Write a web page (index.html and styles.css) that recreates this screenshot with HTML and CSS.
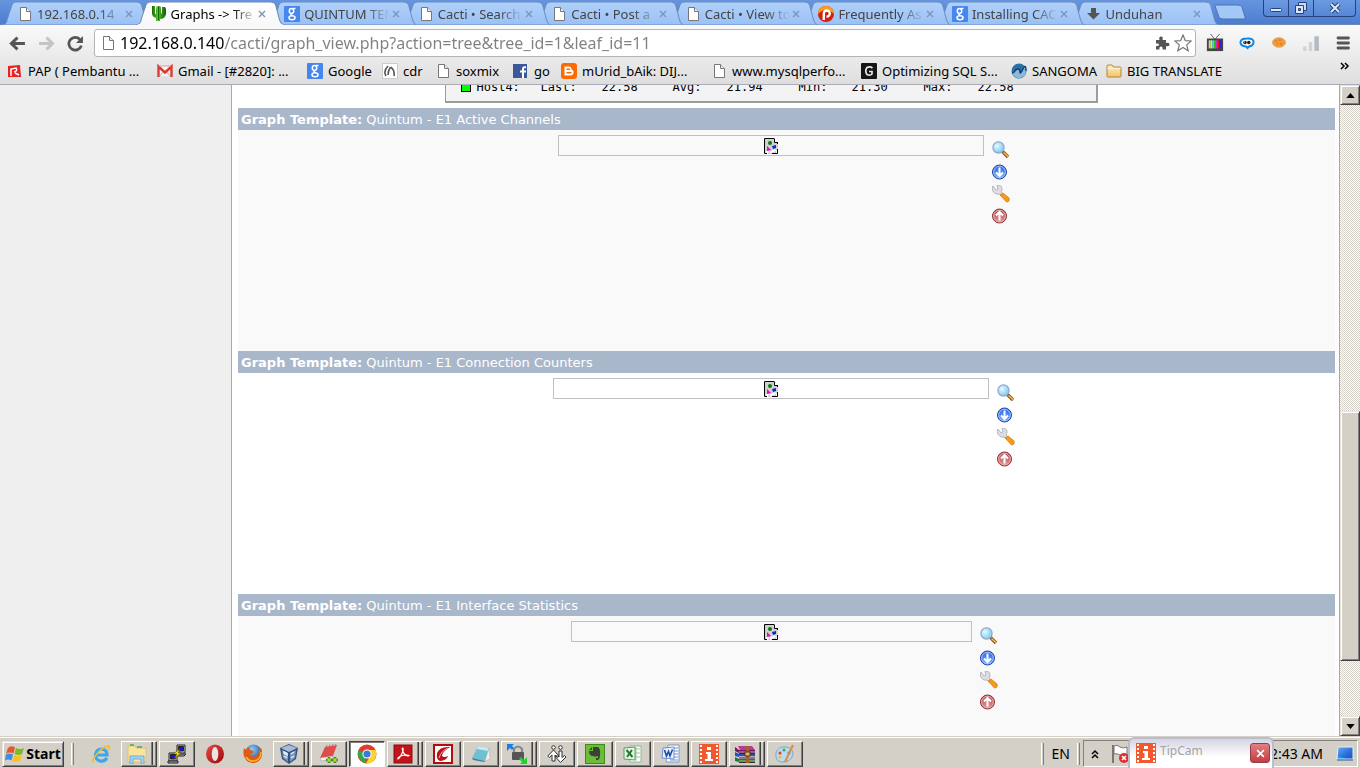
FILE: index.html
```html
<!DOCTYPE html>
<html lang="en">
<head>
<meta charset="utf-8">
<title>Graphs -&gt; Tree Mode</title>
<link rel="stylesheet" href="styles.css">
</head>
<body>
<svg class="defs" aria-hidden="true">
  <defs>
    <linearGradient id="tabFill" x1="0" y1="0" x2="0" y2="1"><stop offset="0" stop-color="#b0d0fa"/><stop offset="1" stop-color="#9ac1f5"/></linearGradient>
    <linearGradient id="activeFill" x1="0" y1="0" x2="0" y2="1"><stop offset="0" stop-color="#fff"/><stop offset="1" stop-color="#f8f8f8"/></linearGradient>
    <linearGradient id="folderFill" x1="0" y1="0" x2="0" y2="1"><stop offset="0" stop-color="#fff0c4"/><stop offset="1" stop-color="#f2c26b"/></linearGradient>
    <linearGradient id="cactusFill" x1="0" y1="0" x2="1" y2="0"><stop offset="0" stop-color="#176a0c"/><stop offset=".4" stop-color="#5cc42c"/><stop offset="1" stop-color="#0e5c08"/></linearGradient>
    <radialGradient id="blueFill" cx=".5" cy=".8" r=".8"><stop offset="0" stop-color="#6fb4ff"/><stop offset="1" stop-color="#2a5fe0"/></radialGradient>
    <radialGradient id="redFill" cx=".5" cy=".8" r=".8"><stop offset="0" stop-color="#e09a9a"/><stop offset="1" stop-color="#b04448"/></radialGradient>
    <radialGradient id="lensFill" cx=".35" cy=".35" r=".7"><stop offset="0" stop-color="#e4fbff"/><stop offset="1" stop-color="#7cc8ec"/></radialGradient>
    <linearGradient id="screenFill" x1="0" y1="0" x2="1" y2="1"><stop offset="0" stop-color="#6aaaf4"/><stop offset=".6" stop-color="#2a6ed8"/><stop offset="1" stop-color="#1850b8"/></linearGradient>
    <radialGradient id="foxBlue" cx=".4" cy=".3" r=".7"><stop offset="0" stop-color="#8fd0f4"/><stop offset="1" stop-color="#1c4c98"/></radialGradient>
    <linearGradient id="operaFill" x1="0" y1="0" x2="1" y2="1"><stop offset="0" stop-color="#ee4848"/><stop offset="1" stop-color="#960808"/></linearGradient>
  </defs>
  <symbol id="tab" viewBox="0 0 147 24" preserveAspectRatio="none"><path d="M0 24C3 23 4 21 4 19L9 4Q10 1 13 1H134Q138 1 139 4L143 19Q144 23 147 24Z" fill="url(#tabFill)" stroke="#6d8cbf"/></symbol>
  <symbol id="tab-active" viewBox="0 0 147 24" preserveAspectRatio="none"><path d="M0 24C3 23 4 21 4 19L9 4Q10 1 13 1H134Q138 1 139 4L143 19Q144 23 147 24Z" fill="url(#activeFill)" stroke="#6d87b4"/><path d="M1 24H146" stroke="#f8f8f8" stroke-width="2"/></symbol>
  <symbol id="page" viewBox="0 0 16 16"><path d="M3.500 1.500H9.500L13.500 5.500V14.500H3.500Z" fill="#fff" stroke="#777"/><path d="M9.500 1.500V5.500H13.500" fill="#eee" stroke="#777"/></symbol>
  <symbol id="cactus" viewBox="0 0 16 16"><path d="M1 0H4V7Q4 8 5 8V3Q5 1 6 0H9Q10 1 10 3V8Q11 8 11 5V1H14Q15 2 15 4V8Q14 13 9 13V15H5V12Q1 11 1 7Z" fill="url(#cactusFill)"/><path d="M7.500 1V14" stroke="#13680c"/></symbol>
  <symbol id="google" viewBox="0 0 16 16"><rect width="16" height="16" rx="1" fill="#4787ed"/><g fill="none" stroke="#fff" stroke-width="1.500"><ellipse cx="7.500" cy="5" rx="2.200" ry="2.400"/><path d="M9 2.600H11.500M7.500 7.500Q6 9 8.500 9.500"/><ellipse cx="8" cy="11.800" rx="3" ry="2"/></g></symbol>
  <symbol id="pp" viewBox="0 0 16 16"><circle cx="8" cy="8" r="8" fill="#d4200c"/><path d="M0 8A8 8 0 0 1 16 8Q12 4 8 4 4 4 0 8Z" fill="#f8a020"/><path d="M5.800 14V7.500A3 3 0 1 1 8.500 10.500" fill="none" stroke="#fff" stroke-width="2.400"/></symbol>
  <symbol id="down" viewBox="0 0 16 16"><path d="M5 2H10V7H14L7.500 13.500 1 7H5Z" fill="#555"/></symbol>
  <symbol id="close" viewBox="0 0 8 8"><path d="M1 1L7 7M7 1L1 7" stroke="currentColor" stroke-width="1.400"/></symbol>
  <symbol id="back" viewBox="0 0 16 16"><path d="M15 8H3M8 2.500L2.200 8 8 13.500" fill="none" stroke="currentColor" stroke-width="2.700"/></symbol>
  <symbol id="reload" viewBox="0 0 16 16"><path d="M12.500 4.500A6 6 0 1 0 13.500 10" fill="none" stroke="#555" stroke-width="2.600"/><path d="M15 1V7.500H8.500Z" fill="#555"/></symbol>
  <symbol id="puzzle" viewBox="0 0 16 16"><path d="M2 5H5.500Q4.500 1.500 7 1.500 9.500 1.500 8.500 5H12V8Q15.500 7 15.500 9.500 15.500 12 12 11V14.500H8.500Q9 11.500 7 11.500 5 11.500 5.500 14.500H2V11Q5 11.500 5 9.500 5 8 2 8.500Z" fill="#555"/></symbol>
  <symbol id="star" viewBox="0 0 18 18"><path d="M9 1L11.300 6.600 17.200 7 12.700 10.900 14.200 16.800 9 13.500 3.800 16.800 5.300 10.900.8 7 6.700 6.600Z" fill="#fff" stroke="#777" stroke-width="1.200"/></symbol>
  <symbol id="tv" viewBox="0 0 18 20"><path d="M4 0L9 6 14 0" fill="none" stroke="#555"/><rect y="5" width="18" height="14" fill="#444"/><path d="M2 7H4V16H2Z" fill="#ccc"/><path d="M4 7H6V16H4Z" fill="#ee3"/><path d="M6 7H8V16H6Z" fill="#3ce0e0"/><path d="M8 7H10V16H8Z" fill="#2c2"/><path d="M10 7H12V16H10Z" fill="#d2d"/><path d="M12 7H14V16H12Z" fill="#e11"/><path d="M14 7H16V16H14Z" fill="#22d"/></symbol>
  <symbol id="chat" viewBox="0 0 18 18"><path d="M9 4.500Q16 4 15.500 8.500 15 12 11 12.500L9.500 14 8 12.500Q2 12 2.500 8 3 4.500 9 4.500Z" fill="#fff" stroke="#1286e6" stroke-width="2"/><circle cx="7" cy="8.500" r="1.800" fill="#222"/><circle cx="10.800" cy="8.500" r="1.800" fill="#222"/><circle cx="6.500" cy="8" r=".6" fill="#fff"/></symbol>
  <symbol id="cookie" viewBox="0 0 18 18"><ellipse cx="9" cy="8.500" rx="6.500" ry="4.800" fill="#ee9a3c" stroke="#e8a860"/><path d="M5 7h2M9 6h2M10 10h2M7 10h1" stroke="#c8701e"/></symbol>
  <symbol id="signal" viewBox="0 0 16 16"><path d="M1 11H4V15H1ZM6 7H9V15H6Z" fill="#cfd3d8"/><path d="M11 2H15V15H11Z" fill="#b4bbc4"/></symbol>
  <symbol id="menu" viewBox="0 0 18 18"><path d="M4 4H14.500M4 9H14.500M4 14H14.500" stroke="#555" stroke-width="2.800" stroke-linecap="round"/></symbol>
  <symbol id="pap" viewBox="0 0 16 16"><path d="M1 3L13 2 14 14H1Z" fill="#e62222"/><path d="M4 13V6L9 5Q11 8 7 9M8 10L12 12" fill="none" stroke="#fff" stroke-width="1.500"/></symbol>
  <symbol id="gmail" viewBox="0 0 16 16"><path d="M0 3H16V13H0Z" fill="#f8f4f4"/><path d="M1.500 14V3.500L8 9.500 14.500 3.500V14" fill="none" stroke="#d93a30" stroke-width="2.400"/><path d="M3 13L6 9M13 13L10 9M2 3H14" stroke="#e09a94"/></symbol>
  <symbol id="cdr" viewBox="0 0 16 16"><rect x=".5" y=".5" width="15" height="15" fill="#fff" stroke="#ccc"/><path d="M6 3Q1 8 4 13M6 12Q6 8 8.500 4M9 4Q13 8 12 13" fill="none" stroke="#555" stroke-width="1.600"/></symbol>
  <symbol id="fb" viewBox="0 0 16 16"><rect x="0" y="1" width="14" height="14" fill="#3b5998"/><path d="M10 15V6Q10 3.800 13 4.200M7 8.500H13" fill="none" stroke="#fff" stroke-width="2"/></symbol>
  <symbol id="blogger" viewBox="0 0 16 16"><rect width="16" height="16" rx="3" fill="#ff6a00"/><path d="M3.500 3.500H8.500Q10.500 4 10.500 6.500 13 7 12.500 10 12 12.500 9.500 12.500H3.500Z" fill="#fff"/><path d="M6 6.300H8.500M6 9.700H10" stroke="#ff6a00" stroke-width="1.400" stroke-linecap="round"/></symbol>
  <symbol id="gbox" viewBox="0 0 16 16"><rect width="16" height="16" rx="1" fill="#151515"/><path d="M11.500 5Q9 3 6 4.500 3.500 8 6 11.500 9 13 11 11V8.500H8" fill="none" stroke="#e8e8e8" stroke-width="1.700"/></symbol>
  <symbol id="sangoma" viewBox="0 0 16 16"><circle cx="8" cy="8" r="7.500" fill="#2c70aa"/><path d="M1 10Q3 10 4 8T7 6 9 9 12 6 15 8Q15 15 8 15 3 15 1 10Z" fill="#8db8d8"/><path d="M1 10Q3 10 4 8T7 6 9 9 12 6 15 8" fill="none" stroke="#123f72" stroke-width="1.400"/></symbol>
  <symbol id="folder" viewBox="0 0 16 16"><path d="M1 13V3Q1 2 2 2H6L7.500 4H14Q15 4 15 5V13Q15 14 14 14H2Q1 14 1 13Z" fill="url(#folderFill)" stroke="#b78336"/><path d="M1.500 5.500H14.500" stroke="#fff3d0"/></symbol>
  <symbol id="broken" viewBox="0 0 14 16"><path d="M1 0H10V4H14V10L12 13V16H4L5 13H2V16H1Z" fill="#d0d0d0"/><path d="M4 .5H.5V15.500H3M4 .5H10.500M10.500 1V4.500H13.500M13.500 4V6M13.500 11V15.500H8" fill="none" stroke="#000"/><path d="M11.500 12L6 14.500" stroke="#fff" stroke-width="2"/><circle cx="6" cy="5" r="2" fill="#087c0c"/><path d="M3 8L7 12 3 13Z" fill="#f000d0"/><path d="M8 8L12 7V10L9 11Z" fill="#1028c8"/></symbol>
  <symbol id="zoom" viewBox="0 0 18 18"><path d="M10.500 10.500L16 16" stroke="#8a5414" stroke-width="3.400"/><path d="M11.500 11.500L16.500 16" stroke="#eebc58" stroke-width="1.600"/><circle cx="6.500" cy="6.500" r="5.600" fill="url(#lensFill)" stroke="#8ca8d4" stroke-width="1.200"/></symbol>
  <symbol id="download" viewBox="0 0 18 18"><circle cx="7.500" cy="9" r="7" fill="url(#blueFill)" stroke="#2444a4"/><circle cx="7.500" cy="9" r="5.800" fill="none" stroke="#a6c8ff"/><path d="M7.500 4.500V13M4 9.500L7.500 13 11 9.500" fill="none" stroke="#fff" stroke-width="2"/></symbol>
  <symbol id="wrench" viewBox="0 0 18 18"><path d="M1 1L4 5 6 4 5 0Q10 0 10 4 10 6 9 7L12 10 10 12 7 9Q2 10 0 4Z" fill="#dcdee4" stroke="#a4a8b2" stroke-width=".8"/><path d="M8 10L11 8 17 13Q18 17 14.500 17Z" fill="#f89a18" stroke="#d67c14" stroke-width=".8"/></symbol>
  <symbol id="top" viewBox="0 0 18 18"><circle cx="7.500" cy="9" r="7" fill="url(#redFill)" stroke="#8c3438"/><circle cx="7.500" cy="9" r="5.800" fill="none" stroke="#f0b4b4"/><path d="M7.500 13.500V5M4 8.500L7.500 5 11 8.500" fill="none" stroke="#fff" stroke-width="2"/></symbol>
  <symbol id="windows" viewBox="0 0 20 20"><path d="M3 4Q6 1 10 3.500L8.500 9.500Q5 7.500 1 9.500Z" fill="#e8562a"/><path d="M11 4Q15 6 19 4L17 10Q13 12 9.500 10Z" fill="#7cba2c"/><path d="M1 10.500Q5 8.500 8 10.500L6.500 16.500Q3 14.500 0 16.500Z" fill="#3c8ee4"/><path d="M9 11Q13 13 17 11L15 17Q11 19 7.500 17Z" fill="#f8c41c"/></symbol>
  <symbol id="ie" viewBox="0 0 20 20"><path d="M16 14Q13 18 9 17 4 15.500 4.500 10.500 5.500 5 10.500 5 16 5.500 16 11H6" fill="none" stroke="#3aa8e8" stroke-width="3.200"/><path d="M3 18Q0 18 5 11 11 3 17 2 20 2 17 6" fill="none" stroke="#f0bc30" stroke-width="1.600"/></symbol>
  <symbol id="explorer" viewBox="0 0 20 20"><path d="M1 2H8L9 4H19V18H1Z" fill="#f8e49a" stroke="#d8bc6c" stroke-width=".8"/><path d="M3 1H7M10 3H15" stroke="#46a860" stroke-width="1.400"/><path d="M3 20V12H17V20H14V15H6V20Z" fill="#a4d4f4" stroke="#5a9cc8" stroke-width=".7"/></symbol>
  <symbol id="putty" viewBox="0 0 20 20"><g stroke="#222"><path d="M10 1H18V9H10ZM2 9H10V17H2Z" fill="#ccc"/><path d="M11.500 2.500H16.500V7H11.500ZM3.500 10.500H8.500V15H3.500Z" fill="#1414d8"/><path d="M8 10H19L17 12H9ZM1 17H11V19H1Z" fill="#aaa"/></g><path d="M13 5L6 10H10L7 15 14 9H11Z" fill="#ffe800" stroke="#554800" stroke-width=".6"/></symbol>
  <symbol id="opera" viewBox="0 0 20 20"><ellipse cx="10" cy="10" rx="9" ry="9.500" fill="url(#operaFill)"/><ellipse cx="10" cy="10" rx="3.300" ry="7" fill="#e8e4de"/></symbol>
  <symbol id="firefox" viewBox="0 0 20 20"><circle cx="10.500" cy="9" r="8.500" fill="url(#foxBlue)"/><path d="M1 4L3 6Q4 4 6 3L7 6Q11 6 10 9L7 10Q9 14 13 12 16 11 16 6L18 4Q21 12 16 17 10 21 4 17 -1 12 1 4Z" fill="#e05a14"/><path d="M3 13Q7 19 14 16 18 14 18 8" fill="none" stroke="#f8bc28" stroke-width="1.400"/></symbol>
  <symbol id="vbox" viewBox="0 0 20 20"><path d="M10 0L19 4 17 15 10 20 3 15 1 4Z" fill="#34527e"/><path d="M10 1L18 4 10 8 2 4Z" fill="#a8bcd8"/><path d="M3 6L9 9V18L4 14ZM11 9L17 6 16 14 11 18Z" fill="#7894bc"/><path d="M5 8L8 9.500V11L5 9ZM5 12L8 14M12 10L15 8M12 14L15 12" fill="none" stroke="#e4edf8" stroke-width="1.500"/></symbol>
  <symbol id="redpad" viewBox="0 0 20 20"><path d="M6 3L18 1 14 12 1 14Z" fill="#e04c4c"/><path d="M1 14L14 12 13 15 2 17Z" fill="#f6f0ee" stroke="#999" stroke-width=".5"/><path d="M7 3L8 1M10 2.500L11 .5M13 2L14 0M16 1.500L17 0" stroke="#888"/><path d="M10 13V19M7 16H13M16 13V19M13 16H19" stroke="#35901a" stroke-width="2.600"/><path d="M10 14V18M8 16H12M16 14V18M14 16H18" stroke="#e8e838"/></symbol>
  <symbol id="chrome" viewBox="0 0 20 20"><circle cx="10" cy="10" r="9.500" fill="#e33c2e"/><path d="M10 10L1.500 6Q-1 15 9 19.500Z" fill="#2fa84c"/><path d="M10 6H18.500Q21 12 16 17.500 13 20 9 19.500L13.500 11Z" fill="#fbd42e"/><circle cx="10" cy="10" r="4.600" fill="#fff"/><circle cx="10" cy="10" r="3.600" fill="#3c78d8"/></symbol>
  <symbol id="adobe" viewBox="0 0 20 20"><rect x="1" y="1" width="18" height="18" fill="#c4141a" stroke="#860c10"/><path d="M9.500 4Q8.500 5 11 9.500 14 13 16 11.500 15 10.500 9 11.500 4 13.500 5 15 7 14.500 10 7 10.500 4 9.500 4Z" fill="none" stroke="#fff" stroke-width="1.200"/></symbol>
  <symbol id="redleaf" viewBox="0 0 20 20"><rect x="1" y="1" width="18" height="18" fill="#fff" stroke="#b40c10" stroke-width="2"/><path d="M17 3Q7 2 4 9 3 17 8 17 14 16 15 12 11 14 9 12 9 8 17 3Z" fill="#b81418"/><path d="M6 14Q8 7 15 4" stroke="#e8b0b0" fill="none"/></symbol>
  <symbol id="notepad" viewBox="0 0 20 20"><path d="M7 2L18 4 14 17 1 14Z" fill="#70c0d4"/><path d="M7 2L18 4 17 7 6 5Z" fill="#c6eaf4"/><path d="M18 4L19 15 14 17Z" fill="#f4f2e8" stroke="#aaa" stroke-width=".5"/><path d="M1 14L14 17 13 18 2 16Z" fill="#447e98"/></symbol>
  <symbol id="lock" viewBox="0 0 20 20"><path d="M7 9V5Q11 0 15 5V9" fill="none" stroke="#888" stroke-width="2.200"/><rect x="5" y="8" width="12" height="8" rx="1" fill="#555"/><path d="M0 0H7L5 2 7 4 5 6 3 4 0 7Z" fill="#1480e8"/><path d="M20 20H13L15 18 12 15 14 13 17 16 20 13Z" fill="#22d030"/></symbol>
  <symbol id="people" viewBox="0 0 20 20"><g fill="#fff" stroke="#333" stroke-width="1"><circle cx="6.500" cy="3.500" r="1.800"/><circle cx="13.500" cy="3.500" r="1.800"/><path d="M6.500 6L.8 12 2.300 13.500 5 11V17H8V11L10.500 13.500 12 12ZM12 7V13L9.500 11.500 8.500 13 13.500 18.500 19 13 17.500 11.500 15 13.500V7Z"/></g></symbol>
  <symbol id="evernote" viewBox="0 0 20 20"><rect x=".5" y=".5" width="19" height="19" fill="#6cbe38" stroke="#3c8c18"/><path d="M8 3H13Q16 5 15 11 15 17 11 16V14H13V12Q10 13 8 12 4 12 4 7H8Z" fill="#3a4238"/><path d="M4 6L7 3V6Z" fill="#3a4238"/></symbol>
  <symbol id="excel" viewBox="0 0 20 20"><path d="M7 2H18V18H7Z" fill="#fff" stroke="#8cbc90"/><path d="M8 5H17M8 9H17M8 13H17M13 3V17" stroke="#98c898"/><path d="M1 4L12 3V16L1 15Z" fill="#e8f4e8" stroke="#5a9c60"/><path d="M3.500 6L9.500 13M9 6L4 13" stroke="#1d7c2c" stroke-width="2"/></symbol>
  <symbol id="word" viewBox="0 0 20 20"><path d="M7 1H18V18H5Z" fill="#fff" stroke="#7c98cc"/><path d="M9 4H17M9 7H17M9 10H17M9 13H17M9 16H17" stroke="#6c8cc8"/><path d="M2 4L13 3V15L1 14Z" fill="#e8f0fc" stroke="#6c90cc"/><path d="M3.500 6L5.500 12 7.500 7.500 9 12 11.500 5.500" fill="none" stroke="#1c4ca4" stroke-width="1.600"/></symbol>
  <symbol id="film" viewBox="0 0 20 20"><rect width="20" height="20" fill="#f2582e"/><path d="M2 1V20M18 1V20" stroke="#fff" stroke-width="2" stroke-dasharray="2 2"/><path d="M8 3H12V6H8ZM7 8H12V15H14V17H6V15H8.500V10H7Z" fill="#fff"/></symbol>
  <symbol id="rar" viewBox="0 0 20 20"><path d="M3 2H17L20 6H5Z" fill="#b43c98"/><path d="M0 3L4 6H20V9H4L0 7Z" fill="#7e1668"/><path d="M0 8L4 10H20V13H4L0 12Z" fill="#2450c0"/><path d="M0 13L4 15H20V18H4L0 17Z" fill="#1c7c34"/><path d="M4 9.500H20M4 14H20M4 18.500H20" stroke="#332838"/><path d="M4 8H20M4 12.500H20M4 17H20" stroke="#e8d8b0" stroke-width=".7"/><path d="M11 2H14V19H11Z" fill="#a4602c"/><path d="M10 8H15V12H10Z" fill="#e8b860" stroke="#553010"/></symbol>
  <symbol id="paint" viewBox="0 0 20 20"><path d="M11 3Q3 2 1 9 0 17 6 18 16 19 18 10 18 4 11 3Z" fill="#b8dcf0" stroke="#7ca8c4"/><circle cx="5" cy="9" r="1.600" fill="#e24434"/><circle cx="9" cy="6" r="1.500" fill="#46a444"/><circle cx="5" cy="13" r="1.600" fill="#f0c020"/><circle cx="14" cy="9" r="1.500" fill="#3c60d0"/><path d="M18 1L10 18" stroke="#d8914a" stroke-width="2.200"/></symbol>
  <symbol id="flag" viewBox="0 0 18 20"><path d="M2 1V19" stroke="#777" stroke-width="2"/><path d="M3 2Q6 0 9 3 12 5 16 3V11Q12 13 9 11 6 9 3 10Z" fill="#fff" stroke="#777"/><circle cx="13" cy="14" r="5" fill="#e02c2c"/><path d="M11 12L15 16M15 12L11 16" stroke="#fff" stroke-width="1.600"/></symbol>
  <symbol id="monitor" viewBox="0 0 18 16"><path d="M2 1H17V13H1Z" fill="url(#screenFill)" stroke="#e8eef8"/><path d="M1 14H17" stroke="#7c93b4" stroke-width="2"/><path d="M2 12Q6 12 9 13" stroke="#4cd4e8" fill="none"/></symbol>
  <symbol id="chev" viewBox="0 0 10 10"><path d="M1 2L4 5 1 8M5 2L8 5 5 8" fill="none" stroke="#000" stroke-width="1.500"/></symbol>
</svg>

<header class="browser">
  <div class="titlebar">
    <nav class="tabs" aria-label="Tabs">
      <div class="tab"><svg class="tab-shape"><use href="#tab"/></svg><svg class="icon"><use href="#page"/></svg><a class="tab-title" href="#">192.168.0.14</a><button class="tab-close" aria-label="Close tab"><svg><use href="#close"/></svg></button></div>
      <div class="tab tab-current"><svg class="tab-shape"><use href="#tab-active"/></svg><svg class="icon"><use href="#cactus"/></svg><a class="tab-title" href="#">Graphs -&gt; Tre</a><button class="tab-close" aria-label="Close tab"><svg><use href="#close"/></svg></button></div>
      <div class="tab"><svg class="tab-shape"><use href="#tab"/></svg><svg class="icon"><use href="#google"/></svg><a class="tab-title" href="#">QUINTUM TEN</a><button class="tab-close" aria-label="Close tab"><svg><use href="#close"/></svg></button></div>
      <div class="tab"><svg class="tab-shape"><use href="#tab"/></svg><svg class="icon"><use href="#page"/></svg><a class="tab-title" href="#">Cacti • Search</a><button class="tab-close" aria-label="Close tab"><svg><use href="#close"/></svg></button></div>
      <div class="tab"><svg class="tab-shape"><use href="#tab"/></svg><svg class="icon"><use href="#page"/></svg><a class="tab-title" href="#">Cacti • Post a</a><button class="tab-close" aria-label="Close tab"><svg><use href="#close"/></svg></button></div>
      <div class="tab"><svg class="tab-shape"><use href="#tab"/></svg><svg class="icon"><use href="#page"/></svg><a class="tab-title" href="#">Cacti • View to</a><button class="tab-close" aria-label="Close tab"><svg><use href="#close"/></svg></button></div>
      <div class="tab"><svg class="tab-shape"><use href="#tab"/></svg><svg class="icon"><use href="#pp"/></svg><a class="tab-title" href="#">Frequently As</a><button class="tab-close" aria-label="Close tab"><svg><use href="#close"/></svg></button></div>
      <div class="tab"><svg class="tab-shape"><use href="#tab"/></svg><svg class="icon"><use href="#google"/></svg><a class="tab-title" href="#">Installing CAC</a><button class="tab-close" aria-label="Close tab"><svg><use href="#close"/></svg></button></div>
      <div class="tab"><svg class="tab-shape"><use href="#tab"/></svg><svg class="icon"><use href="#down"/></svg><a class="tab-title" href="#">Unduhan</a><button class="tab-close" aria-label="Close tab"><svg><use href="#close"/></svg></button></div>
    </nav>
    <button class="new-tab" aria-label="New tab"><svg viewBox="0 0 32 16"><path d="M1 2Q0 1 2 1H24Q27 1 28 3L31 13Q32 15 30 15H9Q6 15 5 13Z" fill="#a4c8f6" stroke="#4d73b4"/></svg></button>
    <div class="window-buttons">
      <button aria-label="Minimize"><svg viewBox="0 0 14 14"><rect x="1.500" y="7.500" width="11" height="3" rx="1" fill="#dce8fa" stroke="#24437c"/></svg></button>
      <button aria-label="Restore"><svg viewBox="0 0 14 14"><path d="M4.500 1.500H12.500V9.500H4.500Z" fill="#c8dcf8" stroke="#24437c"/><path d="M1.500 4.500H9.500V12.500H1.500Z" fill="#dce8fa" stroke="#24437c"/><path d="M4.500 7.500H6.500V9.500H4.500Z" fill="#5b87d0" stroke="#24437c"/></svg></button>
      <button aria-label="Close window"><svg viewBox="0 0 14 14"><path d="M3 3L11 11M11 3L3 11" stroke="#24437c" stroke-width="4"/><path d="M3 3L11 11M11 3L3 11" stroke="#dce8fa" stroke-width="2"/></svg></button>
    </div>
  </div>
  <div class="toolbar">
    <div class="navigation">
      <button aria-label="Back"><svg><use href="#back"/></svg></button>
      <button class="faded" aria-label="Forward"><svg class="flip"><use href="#back"/></svg></button>
      <button aria-label="Reload"><svg><use href="#reload"/></svg></button>
    </div>
    <form class="omnibox">
      <svg class="icon"><use href="#page"/></svg>
      <input class="address" type="text" aria-label="Address" value="192.168.0.140/cacti/graph_view.php?action=tree&amp;tree_id=1&amp;leaf_id=11">
      <svg class="icon"><use href="#puzzle"/></svg>
      <button class="star" type="button" aria-label="Bookmark this page"><svg><use href="#star"/></svg></button>
    </form>
    <div class="extensions">
      <button aria-label="TV"><svg><use href="#tv"/></svg></button>
      <button aria-label="Chat"><svg><use href="#chat"/></svg></button>
      <button aria-label="Cookies"><svg><use href="#cookie"/></svg></button>
      <button aria-label="Signal"><svg><use href="#signal"/></svg></button>
      <button aria-label="Menu"><svg><use href="#menu"/></svg></button>
    </div>
  </div>
  <nav class="bookmarks" aria-label="Bookmarks">
    <a href="#"><svg class="icon"><use href="#pap"/></svg>PAP ( Pembantu ...</a>
    <a href="#"><svg class="icon"><use href="#gmail"/></svg>Gmail - [#2820]: ...</a>
    <a href="#"><svg class="icon"><use href="#google"/></svg>Google</a>
    <a href="#"><svg class="icon"><use href="#cdr"/></svg>cdr</a>
    <a href="#"><svg class="icon"><use href="#page"/></svg>soxmix</a>
    <a href="#"><svg class="icon"><use href="#fb"/></svg>go</a>
    <a href="#"><svg class="icon"><use href="#blogger"/></svg>mUrid_bAik: DIJ...</a>
    <a href="#"><svg class="icon"><use href="#page"/></svg>www.mysqlperfo...</a>
    <a href="#"><svg class="icon"><use href="#gbox"/></svg>Optimizing SQL S...</a>
    <a href="#"><svg class="icon"><use href="#sangoma"/></svg>SANGOMA</a>
    <a href="#"><svg class="icon"><use href="#folder"/></svg>BIG TRANSLATE</a>
    <button class="more" aria-label="More bookmarks"><svg><use href="#chev"/></svg></button>
  </nav>
</header>

<div class="viewport">
  <aside class="sidebar"></aside>
  <main class="graphs">
    <div class="legend-row">
      <div class="legend"><span class="swatch"></span><span>Host4:</span><span>Last:</span><span>22.58</span><span>Avg:</span><span>21.94</span><span>Min:</span><span>21.30</span><span>Max:</span><span>22.58</span></div>
    </div>
    <section class="graph shaded">
      <h2><b>Graph Template:</b> Quintum - E1 Active Channels</h2>
      <div class="graph-body">
        <div class="missing channels"><svg><use href="#broken"/></svg></div>
        <div class="actions"><a href="#" aria-label="Zoom"><svg><use href="#zoom"/></svg></a><a href="#" aria-label="Export"><svg><use href="#download"/></svg></a><a href="#" aria-label="Properties"><svg><use href="#wrench"/></svg></a><a href="#" aria-label="Page top"><svg><use href="#top"/></svg></a></div>
      </div>
    </section>
    <section class="graph">
      <h2><b>Graph Template:</b> Quintum - E1 Connection Counters</h2>
      <div class="graph-body">
        <div class="missing counters"><svg><use href="#broken"/></svg></div>
        <div class="actions"><a href="#" aria-label="Zoom"><svg><use href="#zoom"/></svg></a><a href="#" aria-label="Export"><svg><use href="#download"/></svg></a><a href="#" aria-label="Properties"><svg><use href="#wrench"/></svg></a><a href="#" aria-label="Page top"><svg><use href="#top"/></svg></a></div>
      </div>
    </section>
    <section class="graph shaded">
      <h2><b>Graph Template:</b> Quintum - E1 Interface Statistics</h2>
      <div class="graph-body">
        <div class="missing statistics"><svg><use href="#broken"/></svg></div>
        <div class="actions"><a href="#" aria-label="Zoom"><svg><use href="#zoom"/></svg></a><a href="#" aria-label="Export"><svg><use href="#download"/></svg></a><a href="#" aria-label="Properties"><svg><use href="#wrench"/></svg></a><a href="#" aria-label="Page top"><svg><use href="#top"/></svg></a></div>
      </div>
    </section>
  </main>
  <div class="scrollbar">
    <button class="raised" aria-label="Scroll up"><svg viewBox="0 0 10 6"><path d="M0 6L5 0 10 6Z"/></svg></button>
    <div class="track"><div class="thumb raised"></div></div>
    <button class="raised" aria-label="Scroll down"><svg viewBox="0 0 10 6"><path d="M0 0L5 6 10 0Z"/></svg></button>
  </div>
</div>

<footer class="taskbar">
  <button class="start raised"><svg><use href="#windows"/></svg>Start</button>
  <span class="grip"></span>
  <div class="tasks">
    <button class="task" aria-label="Internet Explorer"><svg><use href="#ie"/></svg></button>
    <button class="task open stacked" aria-label="Explorer"><svg><use href="#explorer"/></svg></button>
    <button class="task open" aria-label="PuTTY"><svg><use href="#putty"/></svg></button>
    <button class="task" aria-label="Opera"><svg><use href="#opera"/></svg></button>
    <button class="task" aria-label="Firefox"><svg><use href="#firefox"/></svg></button>
    <button class="task open stacked" aria-label="VirtualBox"><svg><use href="#vbox"/></svg></button>
    <button class="task open" aria-label="Notes"><svg><use href="#redpad"/></svg></button>
    <button class="task pressed" aria-label="Chrome"><svg><use href="#chrome"/></svg></button>
    <button class="task open stacked" aria-label="Adobe Reader"><svg><use href="#adobe"/></svg></button>
    <button class="task open" aria-label="Editor"><svg><use href="#redleaf"/></svg></button>
    <button class="task open" aria-label="Notepad"><svg><use href="#notepad"/></svg></button>
    <button class="task open stacked" aria-label="WinSCP"><svg><use href="#lock"/></svg></button>
    <button class="task open" aria-label="Transfers"><svg><use href="#people"/></svg></button>
    <button class="task open" aria-label="Evernote"><svg><use href="#evernote"/></svg></button>
    <button class="task open" aria-label="Excel"><svg><use href="#excel"/></svg></button>
    <button class="task open" aria-label="Word"><svg><use href="#word"/></svg></button>
    <button class="task open" aria-label="TipCam"><svg><use href="#film"/></svg></button>
    <button class="task open stacked" aria-label="WinRAR"><svg><use href="#rar"/></svg></button>
    <button class="task open" aria-label="Paint"><svg><use href="#paint"/></svg></button>
  </div>
  <span class="grip"></span>
  <span class="language">EN</span>
  <span class="grip"></span>
  <div class="tray">
    <button class="tray-more" aria-label="Show hidden icons"><svg><use href="#chev"/></svg></button>
    <svg class="tray-flag"><use href="#flag"/></svg>
    <time class="clock">2:43 AM</time>
    <svg class="tray-desktop"><use href="#monitor"/></svg>
  </div>
  <div class="tipcam"><svg><use href="#film"/></svg><span>TipCam</span><button aria-label="Close TipCam"><svg><use href="#close"/></svg></button></div>
</footer>
</body>
</html>
```
FILE: styles.css
```css
* { box-sizing: border-box; }
html, body { height: 100%; }
body {
  margin: 0;
  display: flex;
  flex-direction: column;
  overflow: hidden;
  background: #fff;
  color: #000;
  font: 14px/18px "Noto Sans", "Open Sans", sans-serif;
}
svg { display: block; flex: none; }
button { padding: 0; border: 0; background: none; font: inherit; color: inherit; display: flex; align-items: center; justify-content: center; }
a { color: inherit; text-decoration: none; }
.defs { position: absolute; width: 0; height: 0; }
.icon { width: 16px; height: 16px; }

.browser { flex: none; background: linear-gradient(#fafafa 24px, #dedede); border-bottom: 1px solid #acacb8; font-size: 13px; }
.titlebar { display: flex; height: 25px; padding-left: 3px; background: linear-gradient(#6695e0, #4c7dd0); border-bottom: 1px solid #6d87b4; }
.tabs { display: flex; flex: 0 1 1202px; min-width: 0; isolation: isolate; }
.tab { position: relative; display: flex; flex: 1 1 0; min-width: 0; align-items: center; padding: 4px 2px 0 14px; color: #444; }
.tab:nth-child(3) { z-index: 7; }
.tab:nth-child(4) { z-index: 6; }
.tab:nth-child(5) { z-index: 5; }
.tab:nth-child(6) { z-index: 4; }
.tab:nth-child(7) { z-index: 3; }
.tab:nth-child(8) { z-index: 2; }
.tab:nth-child(9) { z-index: 1; }
.tab.tab-current { z-index: 9; color: #000; }
.tab-shape { position: absolute; top: 1px; left: 0; width: calc(100% + 13px); height: 24px; overflow: visible; }
.tab .icon, .tab-title, .tab-close { position: relative; }
.tab-title { flex: 1; min-width: 0; margin-left: 4px; overflow: hidden; white-space: nowrap; -webkit-mask-image: linear-gradient(90deg, #000 calc(100% - 24px), transparent); mask-image: linear-gradient(90deg, #000 calc(100% - 24px), transparent); }
.tab-close { width: 12px; height: 14px; color: #7c94b8; }
.tab-close svg { width: 8px; height: 8px; }
.new-tab { margin: 4px 0 0 9px; align-self: flex-start; }
.new-tab svg { width: 32px; height: 16px; }
.window-buttons { display: flex; width: 93px; height: 17px; margin: 0 4px 0 auto; border: 1px solid #24437c; border-top: 0; border-radius: 0 0 4px 4px; background: linear-gradient(#6c9ae2, #5686d4); }
.window-buttons button { flex: 0 0 25px; border-right: 1px solid #24437c; }
.window-buttons button:last-child { flex: 1; border: 0; }
.window-buttons svg { width: 14px; height: 14px; }

.toolbar { display: flex; align-items: center; height: 35px; padding: 1px 8px 0 8px; }
.navigation { display: flex; gap: 10px; width: 86px; color: #555; }
.navigation svg { width: 19px; height: 17px; }
.faded { color: #c4c4c4; }
.flip { transform: scaleX(-1); }
.omnibox { display: flex; flex: 1; min-width: 0; align-items: center; gap: 4px; height: 28px; padding: 0 3px 0 5px; background: #fff; border: 1px solid #b4b4b4; border-radius: 3px; }
.address { flex: 1; min-width: 0; height: 24px; padding: 0; border: 0; outline: 0; font: 16px/24px "Noto Sans", "Open Sans", sans-serif; color: transparent; background: linear-gradient(90deg, #000 105px, #808080 105px); -webkit-background-clip: text; background-clip: text; }
.star svg { width: 18px; height: 18px; }
.extensions { display: flex; align-items: center; gap: 14px; padding-left: 10px; }
.extensions svg { width: 18px; height: 18px; }

.bookmarks { display: grid; grid-template-columns: 150px 150px 75px 53px 78px 48px 150px 150px 150px 95px 1fr 14px; height: 24px; padding: 0 8px 2px 7px; }
.bookmarks a { display: flex; align-items: center; gap: 5px; white-space: nowrap; }
.more svg { width: 10px; height: 10px; margin-bottom: 10px; }

.viewport { display: flex; flex: 1; min-height: 0; }
.sidebar { width: 232px; flex: none; background: #efefef; border-right: 1px solid #a8a8a8; }
.graphs { flex: 1; min-width: 0; overflow: hidden; padding: 0 4px 0 6px; }
.legend-row { display: flex; justify-content: center; align-items: flex-end; height: 23px; padding: 0 31px 5px 0; overflow: hidden; }
.legend { display: grid; grid-template-columns: 16px 64px 61px 71px 54px 72px 53px 72px 54px 1fr; flex: none; width: 653px; height: 40px; padding: 16px 16px 0 15px; align-items: start; background: #f3f3f3; border: solid #9c9c9c; border-width: 0 2px 2px 1px; font: 12px/16px "DejaVu Sans Mono", monospace; }
.swatch { width: 10px; height: 10px; margin-top: 3px; background: #0f0; border: 1px solid #000; }
.graph { height: 243px; }
.shaded { background: #f9f9f9; }
.graph h2 { margin: 0; height: 22px; padding: 0 3px; background: #a9b7cb; color: #fff; font: 13px/24px "DejaVu Sans", sans-serif; }
.graph-body { display: flex; justify-content: center; padding: 5px 5px 0 0; gap: 8px; }
.missing { display: flex; justify-content: center; align-items: center; height: 21px; border: 1px solid #c0c0c0; }
.missing svg { width: 14px; height: 16px; }
.channels { width: 426px; }
.counters { width: 436px; }
.statistics { width: 401px; }
.actions { display: flex; flex-direction: column; gap: 4px; padding-top: 6px; }
.actions svg { width: 18px; height: 18px; }

.scrollbar { display: flex; flex-direction: column; width: 21px; flex: none; border-left: 1px solid #a8a8a8; background: repeating-conic-gradient(#d4d0c8 0 25%, #fff 0 50%) 0 0 / 2px 2px; }
.scrollbar button { height: 20px; flex: none; }
.scrollbar button svg { width: 9px; height: 5px; }
.track { flex: 1; padding-top: 306px; display: flex; }
.thumb { width: 100%; height: 250px; }
.raised { background: #d4d0c8; border: 1px solid; border-color: #e8e4dc #404040 #404040 #e8e4dc; box-shadow: inset 1px 1px #fff, inset -1px -1px #808080; }

.taskbar { position: relative; display: flex; flex: none; align-items: center; height: 32px; padding: 3px 2px 1px; background: #d4d0c8; border-top: 1px solid #d4d0c8; box-shadow: inset 0 1px #fff; }
.start { width: 62px; height: 26px; gap: 1px; font-weight: 700; }
.start svg { width: 20px; height: 20px; }
.grip { width: 3px; height: 22px; margin-left: 7px; border: solid; border-width: 0 1px; border-color: #fff #808080 #fff #fff; background: #d4d0c8; }
.tasks { display: flex; gap: 2px; flex: 1; margin-left: 9px; }
.task { width: 36px; height: 26px; }
.task svg { width: 20px; height: 20px; }
.open { border: 1px solid; border-color: #fff #404040 #404040 #fff; box-shadow: inset -1px -1px #808080; }
.stacked { padding-right: 4px; box-shadow: inset -1px -1px #808080, inset -3px 0 #d4d0c8, inset -4px 0 #404040, inset -5px 0 #808080; }
.pressed { background: #fff; border: 1px solid; border-color: #404040 #fff #fff #404040; box-shadow: inset 1px 1px #808080; }
.language { margin: 0 0 0 8px; }
.tray { display: flex; align-items: center; width: 275px; height: 27px; margin-left: 3px; padding: 0 3px 0 6px; border: 1px solid; border-color: #808080 #fff #fff #808080; }
.tray-more svg { width: 10px; height: 10px; transform: rotate(-90deg); }
.tray-flag { width: 18px; height: 20px; margin-left: 11px; }
.clock { margin-left: auto; }
.tray-desktop { width: 18px; height: 16px; margin-left: 13px; }
.tipcam { position: absolute; right: 86px; bottom: 0; display: flex; align-items: flex-start; width: 146px; height: 31px; padding: 4px 2px 0 6px; background: linear-gradient(#d4d4e4, #fff 18px); border: 2px solid #bcbccc; border-bottom: 0; border-radius: 6px 6px 0 0; color: #a4a4a4; font-size: 12px; line-height: 16px; }
.tipcam svg { width: 20px; height: 20px; }
.tipcam span { flex: 1; margin-left: 4px; }
.tipcam button { width: 20px; height: 20px; border: 1px solid #9c3c44; border-radius: 3px; background: linear-gradient(#e08080, #c43c44); color: #fff; }
.tipcam button svg { width: 9px; height: 9px; }
```
